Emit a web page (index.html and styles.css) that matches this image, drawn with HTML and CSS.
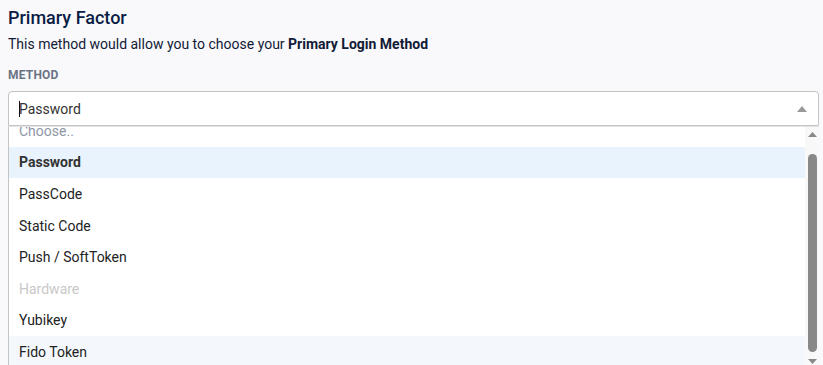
FILE: index.html
```html
<!DOCTYPE html>
<html>
<head>
<meta charset="utf-8">
<link rel="stylesheet" href="styles.css">
</head>
<body>
<div class="panel">
  <h2 class="title">Primary Factor</h2>
  <p class="desc">This method would allow you to choose your <strong>Primary Login Method</strong></p>
  <div class="label">METHOD</div>
  <div class="select">
    <div class="control">
      <span class="caret"></span><span class="value">Password</span>
      <svg class="arrow" width="10" height="6" viewBox="0 0 10 6"><path d="M0 6 L5 0 L10 6 Z" fill="#999"/></svg>
    </div>
    <div class="menu">
      <div class="viewport">
        <ul class="options">
          <li class="opt muted">Choose..</li>
          <li class="opt selected">Password</li>
          <li class="opt">PassCode</li>
          <li class="opt">Static Code</li>
          <li class="opt">Push / SoftToken</li>
          <li class="opt disabled">Hardware</li>
          <li class="opt">Yubikey</li>
          <li class="opt hover">Fido Token</li>
        </ul>
      </div>
      <div class="scrollbar">
        <svg class="sb-arrow" width="9" height="5" viewBox="0 0 9 5"><path d="M0 5 L4.5 0 L9 5 Z" fill="#888"/></svg>
        <div class="track"><div class="thumb"></div></div>
        <svg class="sb-arrow" width="9" height="5" viewBox="0 0 9 5"><path d="M0 0 L4.5 5 L9 0 Z" fill="#888"/></svg>
      </div>
    </div>
  </div>
</div>
</body>
</html>
```
FILE: styles.css
```css
html, body {
  margin: 0;
  padding: 0;
  background: #f9f9fb;
  overflow: hidden;
}
body {
  font-family: Roboto, "Liberation Sans", Arial, sans-serif;
  height: 365px;
}
.panel {
  padding: 4px 4px 0 8px;
}
.title {
  margin: 0;
  font-size: 18px;
  font-weight: 500;
  color: #0b1d45;
  line-height: 28px;
}
.desc {
  margin: 1px 0 0 0;
  font-size: 14px;
  color: #111a36;
  line-height: 22px;
}
.desc strong {
  font-weight: 700;
}
.label {
  margin-top: 12px;
  font-size: 12px;
  font-weight: 700;
  color: #6a7385;
  line-height: 16px;
  letter-spacing: 0.2px;
}
.select {
  margin-top: 8px;
  width: 811px;
}
.control {
  border: 1px solid #c4c4c4;
  border-radius: 4px 4px 0 0;
  background: #fff;
  display: flex;
  align-items: center;
  padding: 0 10px 0 10px;
  box-sizing: border-box;
  height: 35px;
}
.caret {
  width: 1px;
  height: 16px;
  background: #111;
  margin-right: -1px;
}
.value {
  flex: 1;
  font-size: 14px;
  color: #333;
}
.arrow {
  margin-right: 1px;
}
.menu {
  display: flex;
  height: 240px;
  background: #fff;
  border-left: 1px solid #c4c4c4;
  border-top: 1px solid #e4e4e4;
}
.viewport {
  flex: 1;
  overflow: hidden;
}
.options {
  list-style: none;
  margin: -12px 0 0 0;
  padding: 0;
}
.opt {
  height: 31.6px;
  display: flex;
  align-items: center;
  padding-left: 10px;
  font-size: 14px;
  color: #222;
}
.opt.muted {
  color: #8f97a6;
}
.opt.selected {
  background: #e9f3fd;
  font-weight: 700;
  color: #333;
}
.opt.disabled {
  color: #c8c8c8;
}
.opt.hover {
  background: #f4f8fd;
}
.scrollbar {
  width: 14px;
  background: #f8f8f8;
  display: flex;
  flex-direction: column;
  align-items: center;
  padding: 5px 0 3px;
  box-sizing: border-box;
  gap: 5px;
}
.track {
  flex: 1;
  width: 100%;
  display: flex;
  justify-content: center;
  padding: 12px 0 2px;
  box-sizing: border-box;
}
.thumb {
  width: 9px;
  height: 100%;
  background: #888;
  border-radius: 5px;
}
```
